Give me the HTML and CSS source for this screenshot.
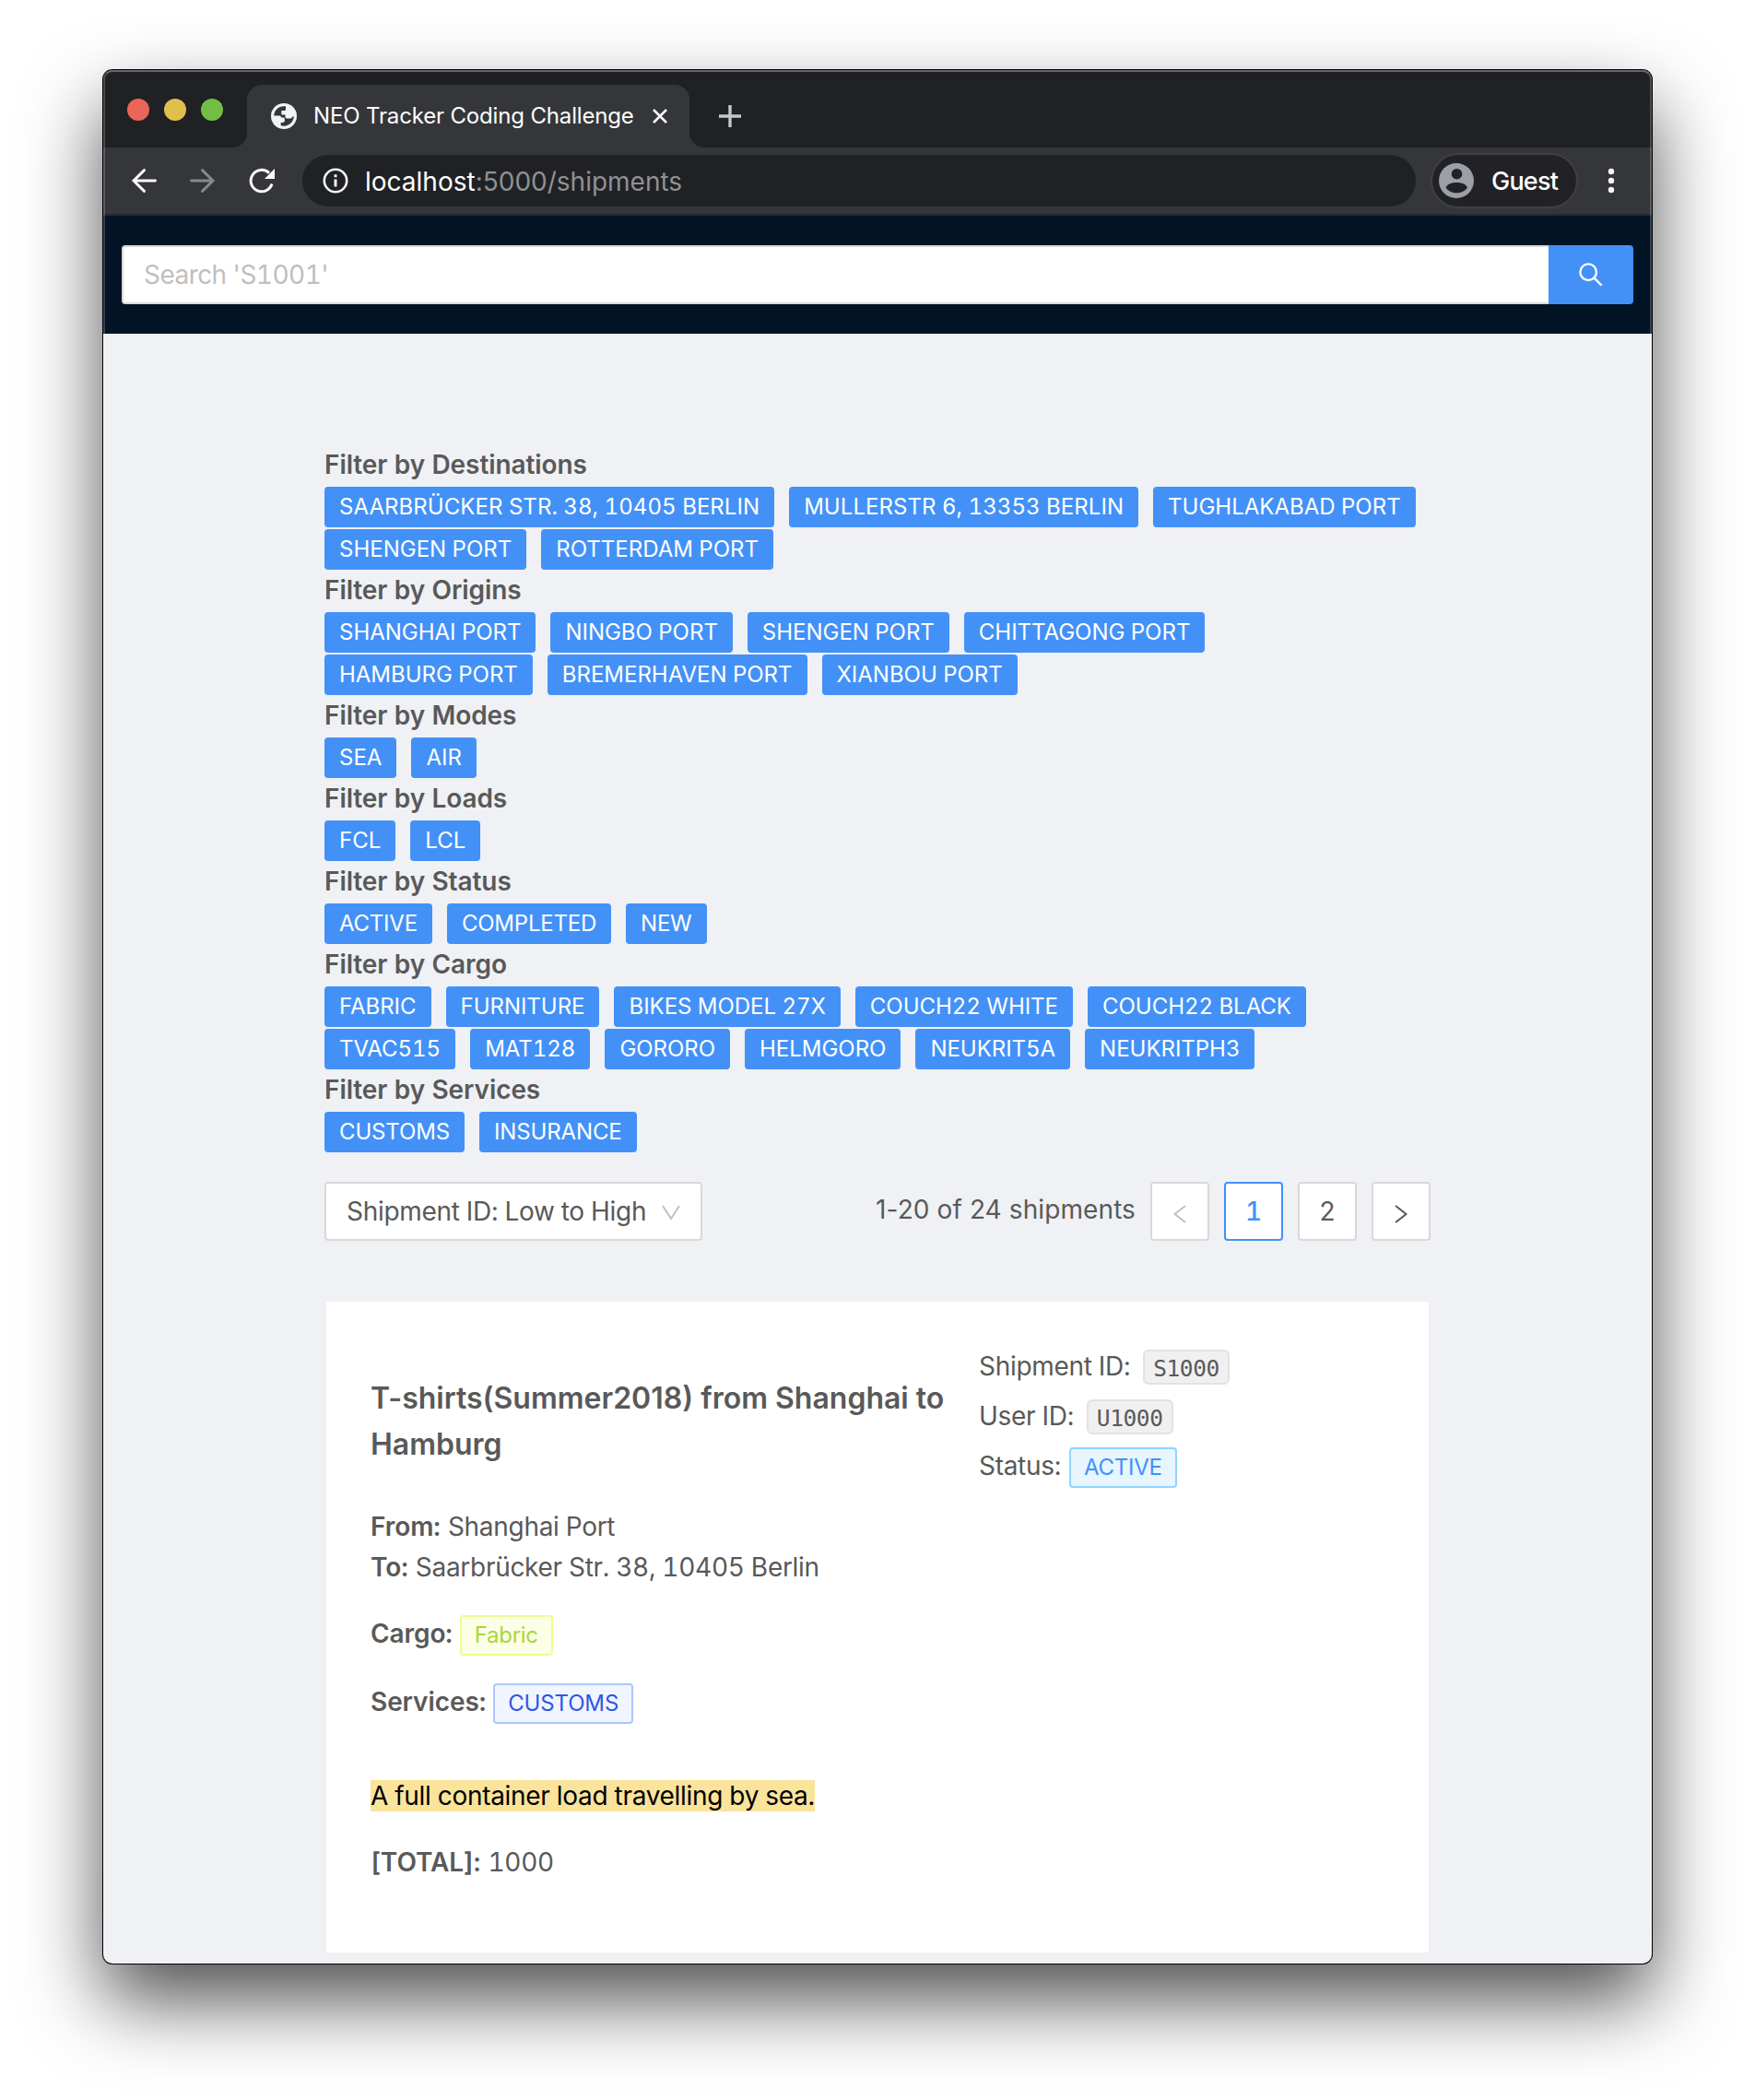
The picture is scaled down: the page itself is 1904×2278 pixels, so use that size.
FILE: index.html
```
<!DOCTYPE html>
<html lang="en">
<head>
<meta charset="utf-8">
<title>NEO Tracker Coding Challenge</title>
<link rel="stylesheet" href="styles.css">
</head>
<body>
<div class="window">
  <div class="tabstrip">
    <div class="lights"><i class="light red"></i><i class="light yellow"></i><i class="light green"></i></div>
    <div class="tab">
      <svg class="globe" viewBox="0 0 28 28"><circle cx="14" cy="14" r="14" fill="#f1f3f4"/><path fill="#35363a" d="M3.200 13.600C3.400 7.600 8 3.400 14 3.300h2v3.200c0 1-.6 1.500-1.500 1.500h-3.200v3.200c0 .9.600 1.300 1.500 1.300h2.700v2.300c0 1 .8 1.700 1.800 1.700h3.400c1.500 0 2.600-1 3-2.200h1.100C24.600 19.600 20 24.700 14 24.800c-1.200 0-2.300-.2-3.300-.5v-3.400h2c1.200 0 2.200-1 2.200-2.200v-1.500c0-1-.7-1.700-1.700-1.700h-1.500c-.8 0-1.200-.5-1.200-1.200v-.7z"/></svg>
      <span class="tab-title">NEO Tracker Coding Challenge</span>
      <svg class="close" viewBox="0 0 16 16"><path d="M1 1l14 14M15 1L1 15" stroke="#f5f5f5" stroke-width="2.600"/></svg>
    </div>
    <svg class="plus" viewBox="0 0 24 24"><path d="M12 0v24M0 12h24" stroke="#c3c6ca" stroke-width="3.400"/></svg>
  </div>
  <div class="toolbar">
    <svg class="nav" viewBox="0 0 28 28"><path d="M14.500 2.600L3 14l11.500 11.400M3 14h23.500" fill="none" stroke="#fafafa" stroke-width="2.900" stroke-linecap="round"/></svg>
    <svg class="nav" viewBox="0 0 28 28"><path d="M13.500 2.600L25 14 13.500 25.400M25 14H1.500" fill="none" stroke="#86888a" stroke-width="2.900" stroke-linecap="round"/></svg>
    <svg class="nav" viewBox="0 0 28 28"><path d="M25 17.500A11.700 11.700 0 1 1 22 5.700" fill="none" stroke="#fafafa" stroke-width="3"/><path d="M28 1v11H17z" fill="#fafafa"/></svg>
    <div class="omnibox">
      <svg class="info" viewBox="0 0 28 28"><circle cx="14" cy="14" r="12.200" fill="none" stroke="#f1f3f4" stroke-width="2.600"/><path d="M14 12.500v8M14 7.300v3" stroke="#f1f3f4" stroke-width="3"/></svg>
      <span class="url"><b>localhost</b>:5000/shipments</span>
    </div>
    <div class="guest">
      <svg class="avatar" viewBox="0 0 38 38"><circle cx="19" cy="19" r="19" fill="#9aa0a6"/><circle cx="19.500" cy="11.700" r="5.800" fill="#222226"/><path d="M7.600 26.400C9 22.800 14 21 19.200 21S29.500 22.800 31 26.400C28.500 30 24 32.200 19.200 32.200S10 30 7.600 26.400z" fill="#222226"/></svg>
      <span class="guest-name">Guest</span>
    </div>
    <svg class="dots" viewBox="0 0 8 28"><circle cx="4" cy="4" r="3.200"/><circle cx="4" cy="14" r="3.200"/><circle cx="4" cy="24" r="3.200"/></svg>
  </div>
  <header class="header">
    <div class="search-input">Search 'S1001'</div>
    <div class="search-button"><svg viewBox="0 0 26 26"><circle cx="10.200" cy="10.200" r="8.800"/><path d="M16.600 16.600l8 8"/></svg></div>
  </header>
  <main class="content">
    <section class="filters">
      <h5>Filter by Destinations</h5>
      <div class="tags"><span class="tag address">SAARBRÜCKER STR. 38, 10405 BERLIN</span><span class="tag address">MULLERSTR 6, 13353 BERLIN</span><span class="tag">TUGHLAKABAD PORT</span><span class="tag">SHENGEN PORT</span><span class="tag">ROTTERDAM PORT</span></div>
      <h5>Filter by Origins</h5>
      <div class="tags origins"><span class="tag">SHANGHAI PORT</span><span class="tag">NINGBO PORT</span><span class="tag">SHENGEN PORT</span><span class="tag">CHITTAGONG PORT</span><span class="tag">HAMBURG PORT</span><span class="tag">BREMERHAVEN PORT</span><span class="tag">XIANBOU PORT</span></div>
      <h5>Filter by Modes</h5>
      <div class="tags"><span class="tag">SEA</span><span class="tag">AIR</span></div>
      <h5>Filter by Loads</h5>
      <div class="tags"><span class="tag">FCL</span><span class="tag">LCL</span></div>
      <h5>Filter by Status</h5>
      <div class="tags status"><span class="tag">ACTIVE</span><span class="tag">COMPLETED</span><span class="tag">NEW</span></div>
      <h5>Filter by Cargo</h5>
      <div class="tags cargo-tags"><span class="tag">FABRIC</span><span class="tag">FURNITURE</span><span class="tag">BIKES MODEL 27X</span><span class="tag">COUCH22 WHITE</span><span class="tag">COUCH22 BLACK</span><span class="tag">TVAC515</span><span class="tag">MAT128</span><span class="tag">GORORO</span><span class="tag">HELMGORO</span><span class="tag">NEUKRIT5A</span><span class="tag">NEUKRITPH3</span></div>
      <h5>Filter by Services</h5>
      <div class="tags services-tags"><span class="tag">CUSTOMS</span><span class="tag">INSURANCE</span></div>
    </section>
    <div class="controls">
      <div class="select"><span>Shipment ID: Low to High</span><svg viewBox="0 0 20 17"><path d="M1 1l9 14 9-14" fill="none" stroke="#bfbfbf" stroke-width="2"/></svg></div>
      <div class="pagination">
        <span class="total">1-20 of 24 shipments</span>
        <span class="page"><svg viewBox="0 0 14 20"><path d="M13 1L1.500 10 13 19" fill="none" stroke="#bfbfbf" stroke-width="2"/></svg></span>
        <span class="page current">1</span>
        <span class="page">2</span>
        <span class="page"><svg viewBox="0 0 14 20"><path d="M1 1l11.500 9L1 19" fill="none" stroke="#595959" stroke-width="2"/></svg></span>
      </div>
    </div>
    <article class="card">
      <div class="main">
        <h4>T-shirts(Summer2018) from Shanghai to Hamburg</h4>
        <p><strong>From:</strong> Shanghai Port<br><strong>To:</strong> Saarbrücker Str. 38, 10405 Berlin</p>
        <div class="field cargo"><strong>Cargo:</strong><span class="tag lime">Fabric</span></div>
        <div class="field services"><strong>Services:</strong><span class="tag geekblue">CUSTOMS</span></div>
        <p><mark>A full container load travelling by sea.</mark></p>
        <p><strong>[TOTAL]:</strong> 1000</p>
      </div>
      <div class="meta">
        <div class="field"><span>Shipment ID:</span><code>S1000</code></div>
        <div class="field"><span>User ID:</span><code>U1000</code></div>
        <div class="field"><span>Status:</span><span class="tag blue">ACTIVE</span></div>
      </div>
    </article>
  </main>
</div>
</body>
</html>
```
FILE: styles.css
```
* { box-sizing: border-box; }
body {
  margin: 0;
  padding: 76px 112px 148px;
  background: #fff;
  font: 28px/44px Inter, "Liberation Sans", sans-serif;
  color: #595959;
}
svg { display: block; flex: none; }
.window {
  position: relative;
  height: 2054px;
  border-radius: 10px;
  overflow: hidden;
  background: #eff1f5;
  box-shadow: 0 0 0 1px #000, 0 40px 84px rgba(0, 0, 0, .69);
}
/* bevel along the window edge */
.window::after {
  content: "";
  position: absolute;
  inset: 0;
  border: 2px solid rgba(255, 255, 255, .2);
  border-top-color: rgba(255, 255, 255, .32);
  border-bottom: 0;
  border-radius: 10px;
}

/* browser chrome */
.tabstrip {
  display: flex;
  height: 84px;
  padding: 16px 26px 0;
  background: #202124;
}
.lights { display: flex; gap: 16px; padding-top: 15px; width: 130px; }
.light { width: 24px; height: 24px; border-radius: 50%; }
.red { background: #ec6559; }
.yellow { background: #e0bf4c; }
.green { background: #72be47; }
.tab {
  position: relative;
  display: flex;
  align-items: center;
  width: 480px;
  height: 68px;
  padding: 0 24px 0 26px;
  border-radius: 16px 16px 0 0;
  background: #35363a;
}
.tab::before, .tab::after {
  content: "";
  position: absolute;
  bottom: 0;
  width: 16px;
  height: 16px;
}
.tab::before { left: -16px; background: radial-gradient(circle at 0 0, #202124 15.500px, #35363a 16.500px); }
.tab::after { right: -16px; background: radial-gradient(circle at 100% 0, #202124 15.500px, #35363a 16.500px); }
.globe { width: 28px; height: 28px; }
.tab-title {
  flex: 1;
  margin-left: 18px;
  font-size: 24px;
  letter-spacing: -.16px;
  white-space: nowrap;
  color: #fff;
}
.close { width: 16px; height: 16px; }
.plus { width: 24px; height: 24px; margin: 22px 0 0 32px; }
.toolbar {
  display: flex;
  align-items: center;
  height: 74px;
  padding: 0 40px 0 30px;
  border-bottom: 2px solid #292a2b;
  background: #35363a;
}
.nav { width: 28px; height: 28px; margin-right: 36px; }
.omnibox {
  display: flex;
  align-items: center;
  width: 1208px;
  height: 56px;
  margin-left: -6px;
  padding-left: 22px;
  border-radius: 28px;
  background: #202124;
}
.info { width: 28px; height: 28px; }
.url { margin-left: 18px; padding-top: 1px; color: #8f9194; }
.url b { font-weight: 400; color: #fff; }
.guest {
  display: flex;
  align-items: center;
  width: 160px;
  height: 60px;
  margin-left: 16px;
  padding-left: 7px;
  border: 2px solid #3f4044;
  border-radius: 30px;
  background: #222226;
  color: #fff;
  font-size: 27px;
  font-weight: 500;
  letter-spacing: -.8px;
}
.guest-name { padding-top: 1px; }
.avatar { width: 38px; height: 38px; margin-right: 19px; }
.dots { width: 8px; height: 28px; margin-left: 32px; fill: #f5f5f5; }

/* page header */
.header { display: flex; height: 128px; padding: 32px 20px; background: #021325; }
.search-input {
  flex: 1;
  border: 2px solid #d9d9d9;
  border-right: 0;
  border-radius: 4px 0 0 4px;
  padding: 8px 22px;
  background: #fff;
  color: #bfbfbf;
}
.search-button {
  display: grid;
  place-items: center;
  width: 92px;
  border-radius: 0 4px 4px 0;
  background: #4391f7;
}
.search-button svg { width: 26px; height: 26px; fill: none; stroke: #fff; stroke-width: 2.400; }

/* content */
.header, .content { font-feature-settings: "tnum"; }
.header { letter-spacing: -.55px; }
.content { width: 1200px; margin: 0 auto; padding-top: 120px; letter-spacing: -.3px; }
h4, h5, strong { font-weight: 600; letter-spacing: -.08px; }
h4, h5, p { margin: 0; }
h5 { font-size: 28px; line-height: 44px; }
h4 { font-size: 32px; line-height: 50px; letter-spacing: 0; }
h4, .total { font-feature-settings: normal; }
.tags { display: flex; flex-wrap: wrap; gap: 2px 16px; padding-top: 2px; }
.tags.origins { padding-right: 200px; }
.tag {
  height: 44px;
  padding: 0 14px;
  border: 2px solid #4391f7;
  border-radius: 4px;
  background: #4391f7;
  color: #fff;
  font-size: 24px;
  line-height: 40px;
  letter-spacing: 0;
  white-space: nowrap;
}
.tag.address { letter-spacing: .05px; }
.origins .tag { letter-spacing: -.02px; }
.cargo-tags .tag { letter-spacing: -.03px; }
.services-tags .tag, .tag.geekblue { letter-spacing: -.14px; }
.status .tag, .tag.blue { letter-spacing: -.22px; }
.tag.lime { letter-spacing: -.3px; border-color: #eaff8f; background: #fcffe6; color: #aad63d; }
.tag.geekblue { border-color: #adc6ff; background: #f0f5ff; color: #3355e3; }
.tag.blue { border-color: #91d5ff; background: #e6f5fe; color: #4391f7; }
.controls { display: flex; justify-content: space-between; margin-top: 32px; height: 64px; }
.select {
  display: flex;
  align-items: center;
  justify-content: space-between;
  width: 410px;
  padding: 0 22px;
  border: 2px solid #d9d9d9;
  border-radius: 4px;
  background: #fff;
}
.select svg { width: 20px; height: 17px; margin-top: 3px; }
.pagination { display: flex; gap: 16px; }
.total { line-height: 60px; letter-spacing: .1px; }
.page {
  display: grid;
  place-items: center;
  width: 64px;
  height: 64px;
  border: 2px solid #d9d9d9;
  border-radius: 4px;
  background: #fff;
}
.page svg { width: 14px; height: 20px; margin-top: 5px; }
.page.current { border-color: #4391f7; color: #4391f7; font-weight: 500; }
.card {
  display: flex;
  height: 710px;
  margin-top: 64px;
  padding: 48px;
  border: 2px solid #f0f0f0;
  border-radius: 4px;
  background: #fff;
}
.main { width: 660px; padding-top: 32px; }
.main h4 { margin-bottom: 42px; }
.main p + p { margin-top: 28px; }
.main p strong { margin-right: 1px; }
.field { display: flex; gap: 8px; }
.field .tag { margin-top: 2px; }
.cargo { margin-top: 28px; }
.services { margin: 28px 0 56px; }
.cargo, .services { height: 46px; }
.meta .field { height: 54px; }
.meta .tag { margin-left: 1px; }
code {
  height: 38px;
  margin: 4px 0 0 6px;
  padding: 3px 9px 0;
  border: 2px solid #e2e2e2;
  border-radius: 6px;
  background: #f0f0f0;
  font: 24.500px/32px "DejaVu Sans Mono", "Liberation Mono", monospace;
  letter-spacing: -.42px;
}
mark { background: #fae39b; color: #000; }
```
